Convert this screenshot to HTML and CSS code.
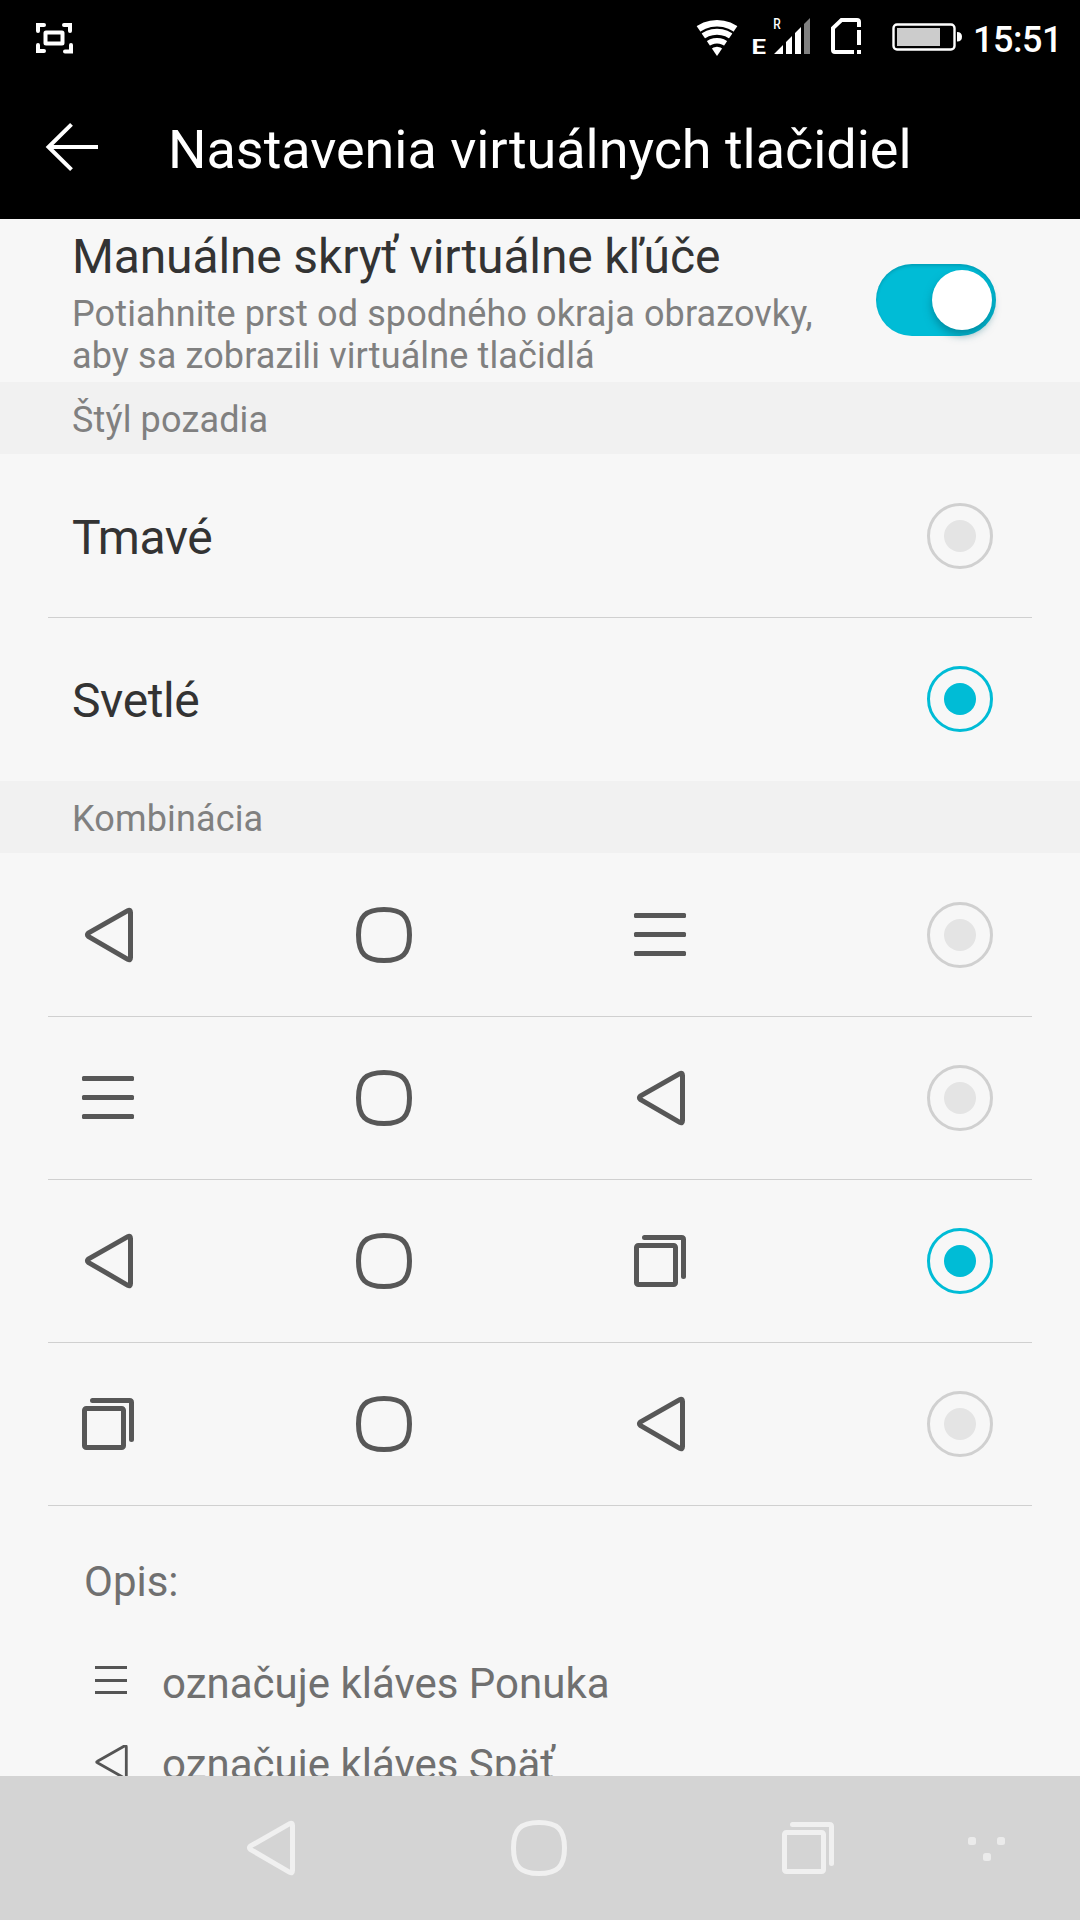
FILE: index.html
```html
<!DOCTYPE html>
<html lang="sk">
<head>
<meta charset="utf-8">
<title>Nastavenia virtuálnych tlačidiel</title>
<link rel="stylesheet" href="styles.css">
</head>
<body>
<svg class="defs" width="0" height="0" aria-hidden="true">
  <symbol id="back" viewBox="0 0 72 72"><path d="M16.2 34.2 55.8 11.7Q58.5 10.3 58.5 13.5V58.5Q58.5 61.7 55.8 60.3L16.2 37.3Q14.6 35.8 16.2 34.2Z" stroke-linejoin="round"/></symbol>
  <symbol id="home" viewBox="0 0 72 72"><path d="M36 10.5C54.5 10.5 61.5 17.5 61.5 36S54.5 61.5 36 61.5 10.5 54.5 10.5 36 17.5 10.5 36 10.5Z"/></symbol>
  <symbol id="menu" viewBox="0 0 72 72"><g fill="currentColor" stroke="none"><rect x="10" y="14" width="52" height="5" rx="1.5"/><rect x="10" y="33" width="52" height="5" rx="1.5"/><rect x="10" y="52" width="52" height="5" rx="1.5"/></g></symbol>
  <symbol id="recent" viewBox="0 0 72 72"><rect x="12.5" y="20.5" width="39" height="39" rx="1.8"/><path d="M20.5 12.5H57.5Q59.5 12.5 59.5 14.5V51.5" stroke-linecap="round"/></symbol>
</svg>
<div class="screen">
  <header>
    <div class="status">
      <svg class="capture" width="38" height="32" viewBox="36 23 38 32"><g fill="none" stroke="#fff" stroke-width="4" stroke-linecap="round"><path d="M38 31V25H44M64 25H70V31M38 45V51H44M65 51.5H71V45"/><rect x="45.5" y="32.5" width="17" height="11" rx=".5"/></g></svg>
      <svg class="tray" width="272" height="75" viewBox="692 0 272 75">
        <clipPath id="fan"><path d="M717 56 692.5 20V10H741.5V20Z"/></clipPath>
        <g clip-path="url(#fan)" fill="none" stroke="#fff"><circle cx="717" cy="56" r="32.8" stroke-width="6.5"/><circle cx="717" cy="56" r="24.3" stroke-width="6"/><circle cx="717" cy="56" r="15.3" stroke-width="5.6"/><circle cx="717" cy="56" r="4.6" stroke-width="9.2"/></g>
        <text x="751.5" y="54" font-size="21" font-weight="700" fill="#fff" textLength="14.5" lengthAdjust="spacingAndGlyphs">E</text>
        <text x="773.3" y="29" font-size="15" font-weight="500" fill="#fff" textLength="7.5" lengthAdjust="spacingAndGlyphs">R</text>
        <path fill="#fff" d="M774 54 783 45V54ZM786 42 792 36V54H786ZM795 33 801 27V54H795Z"/><path fill="#808080" d="M804 24 810 18V54H804Z"/>
        <path fill="none" stroke="#fff" stroke-width="4" d="M854 52H835Q833 52 833 50V28L841.5 20H857Q859 20 859 22V27M859 30V45M859 50V54"/>
        <rect x="893.5" y="24.5" width="61" height="25" rx="3.5" fill="none" stroke="#fff" stroke-width="2.4"/><path fill="#ccc" d="M897 28H940V46H897Z"/><path fill="#fff" d="M957 32Q962 32 962 36.8T957 41.5Z"/>
      </svg>
      <span class="time">15:51</span>
    </div>
    <div class="titlebar">
      <svg class="arrow" width="54" height="50" viewBox="45 122 54 50"><path d="M98 147H48M71.500 124.300 48.500 147 71.500 169.700" fill="none" stroke="#fff" stroke-width="4"/></svg>
      <h1>Nastavenia virtuálnych tlačidiel</h1>
    </div>
  </header>
  <main>
    <section class="switch-row">
      <div class="copy"><h2>Manuálne skryť virtuálne kľúče</h2><p>Potiahnite prst od spodného okraja obrazovky,<br>aby sa zobrazili virtuálne tlačidlá</p></div>
      <div class="toggle"><i class="knob"></i></div>
    </section>
    <h3>Štýl pozadia</h3>
    <div class="row option"><span>Tmavé</span><i class="radio"></i></div>
    <div class="row option line last"><span>Svetlé</span><i class="radio on"></i></div>
    <h3>Kombinácia</h3>
    <div class="row combo"><svg class="key"><use href="#back"/></svg><svg class="key"><use href="#home"/></svg><svg class="key"><use href="#menu"/></svg><i class="radio"></i></div>
    <div class="row combo line"><svg class="key"><use href="#menu"/></svg><svg class="key"><use href="#home"/></svg><svg class="key"><use href="#back"/></svg><i class="radio"></i></div>
    <div class="row combo line"><svg class="key"><use href="#back"/></svg><svg class="key"><use href="#home"/></svg><svg class="key"><use href="#recent"/></svg><i class="radio on"></i></div>
    <div class="row combo line"><svg class="key"><use href="#recent"/></svg><svg class="key"><use href="#home"/></svg><svg class="key"><use href="#back"/></svg><i class="radio"></i></div>
    <section class="legend line">
      <p>Opis:</p>
      <ul>
        <li><svg width="34" height="34" viewBox="0 0 34 34"><path d="M1 3.500H33M1 16.500H33M1 28.500H33" stroke-width="3"/></svg><span>označuje kláves Ponuka</span></li>
        <li><svg width="34" height="34" viewBox="0 0 34 34"><path d="M3.500 16.200 30 1.200Q32.300 0 32.300 2V31.500Q32.300 34 30 32.800L3.500 17.800Q1.800 17 3.500 16.200Z" stroke-width="2.800"/></svg><span>označuje kláves Späť</span></li>
      </ul>
    </section>
  </main>
  <nav>
    <svg class="key"><use href="#back"/></svg><svg class="key"><use href="#home"/></svg><svg class="key"><use href="#recent"/></svg>
    <svg class="dots" width="38" height="24" viewBox="0 0 38 24"><rect width="8" height="8" rx="2.500"/><rect x="29" width="8" height="8" rx="2.500"/><rect x="15" y="16" width="8" height="8" rx="2.500"/></svg>
  </nav>
</div>
</body>
</html>
```
FILE: styles.css
```css
* { box-sizing: border-box; margin: 0; padding: 0; }
body { font-family: Roboto, sans-serif; background: #f7f7f7; }
h1, h2, h3 { font-weight: 400; }
svg { display: block; flex: none; }
.defs { position: absolute; }
.screen { width: 1080px; height: 1920px; display: flex; flex-direction: column; overflow: hidden; }
header { height: 219px; flex: none; background: #000; color: #fff; }
.status { height: 75px; display: flex; align-items: flex-start; padding-left: 36px; }
.capture { margin-top: 23px; }
.tray { margin-left: 618px; }
.time { margin: 19px 0 0 9px; font-size: 36px; line-height: 42px; font-weight: 500; letter-spacing: -.5px; }
.titlebar { height: 144px; display: flex; align-items: center; padding-left: 45px; }
h1 { margin-left: 69px; padding-top: 5px; font-size: 54px; line-height: 64px; letter-spacing: -.04px; white-space: nowrap; }

main { flex: 1; min-height: 0; overflow: hidden; background: #f7f7f7; }
.switch-row { height: 163px; display: flex; justify-content: space-between; padding: 10px 84px 0 72px; }
h2 { font-size: 48px; line-height: 56px; color: #333; letter-spacing: -.14px; white-space: nowrap; }
.copy p { margin-top: 8px; font-size: 36px; line-height: 42px; color: #808080; letter-spacing: .12px; white-space: nowrap; }
.toggle { width: 120px; height: 72px; margin-top: 35px; padding: 6px 4px 6px 56px; border-radius: 36px; background: #00bcd6; box-shadow: inset 0 2px 3px rgba(0, 80, 95, .25); }
.knob { display: block; width: 60px; height: 60px; border-radius: 50%; background: #fff; box-shadow: 0 5px 9px rgba(0, 100, 118, .55); }
h3 { height: 72px; padding: 17px 72px 0; background: #f1f1f1; font-size: 36px; line-height: 42px; color: #808080; letter-spacing: .15px; }
.row { height: 163px; display: flex; align-items: center; padding: 1px 87px 0 72px; }
.line { background: linear-gradient(#d0d0d0, #d0d0d0) 48px 0 / 984px 1px no-repeat; }
.row.last { height: 164px; padding-bottom: 1px; }
.option { justify-content: space-between; font-size: 48px; color: #333; letter-spacing: -.4px; }
.option span { padding-top: 3px; }
.radio { display: grid; place-items: center; flex: none; width: 66px; height: 66px; border: 3px solid #d0d0d0; border-radius: 50%; }
.radio::after { content: ""; width: 32px; height: 32px; border-radius: 50%; background: #e4e4e4; }
.radio.on { border-color: #00bcd6; }
.radio.on::after { background: #00bcd6; }
.key { width: 72px; height: 72px; color: #575757; fill: none; stroke: currentColor; stroke-width: 5px; }
.combo { padding-top: 0; }
.combo .key { margin-right: 204px; }
.combo .key:nth-child(3) { margin-right: auto; }
.legend { padding: 52px 84px 0; font-size: 42px; line-height: 50px; color: #707070; }
.legend ul { margin-top: 33px; list-style: none; }
.legend li { height: 81px; display: flex; align-items: center; padding-left: 10px; }
.legend li svg { margin-right: 34px; fill: none; stroke: #555; }
.legend li span { padding-top: 7px; }

nav { height: 144px; flex: none; display: flex; align-items: center; padding-left: 234px; background: #d4d4d4; }
nav .key { margin-right: 197px; color: #f0f0f0; }
nav .key:nth-child(3) { margin-right: 124px; }
.dots { fill: #ebebeb; margin-top: 1px; }
```
